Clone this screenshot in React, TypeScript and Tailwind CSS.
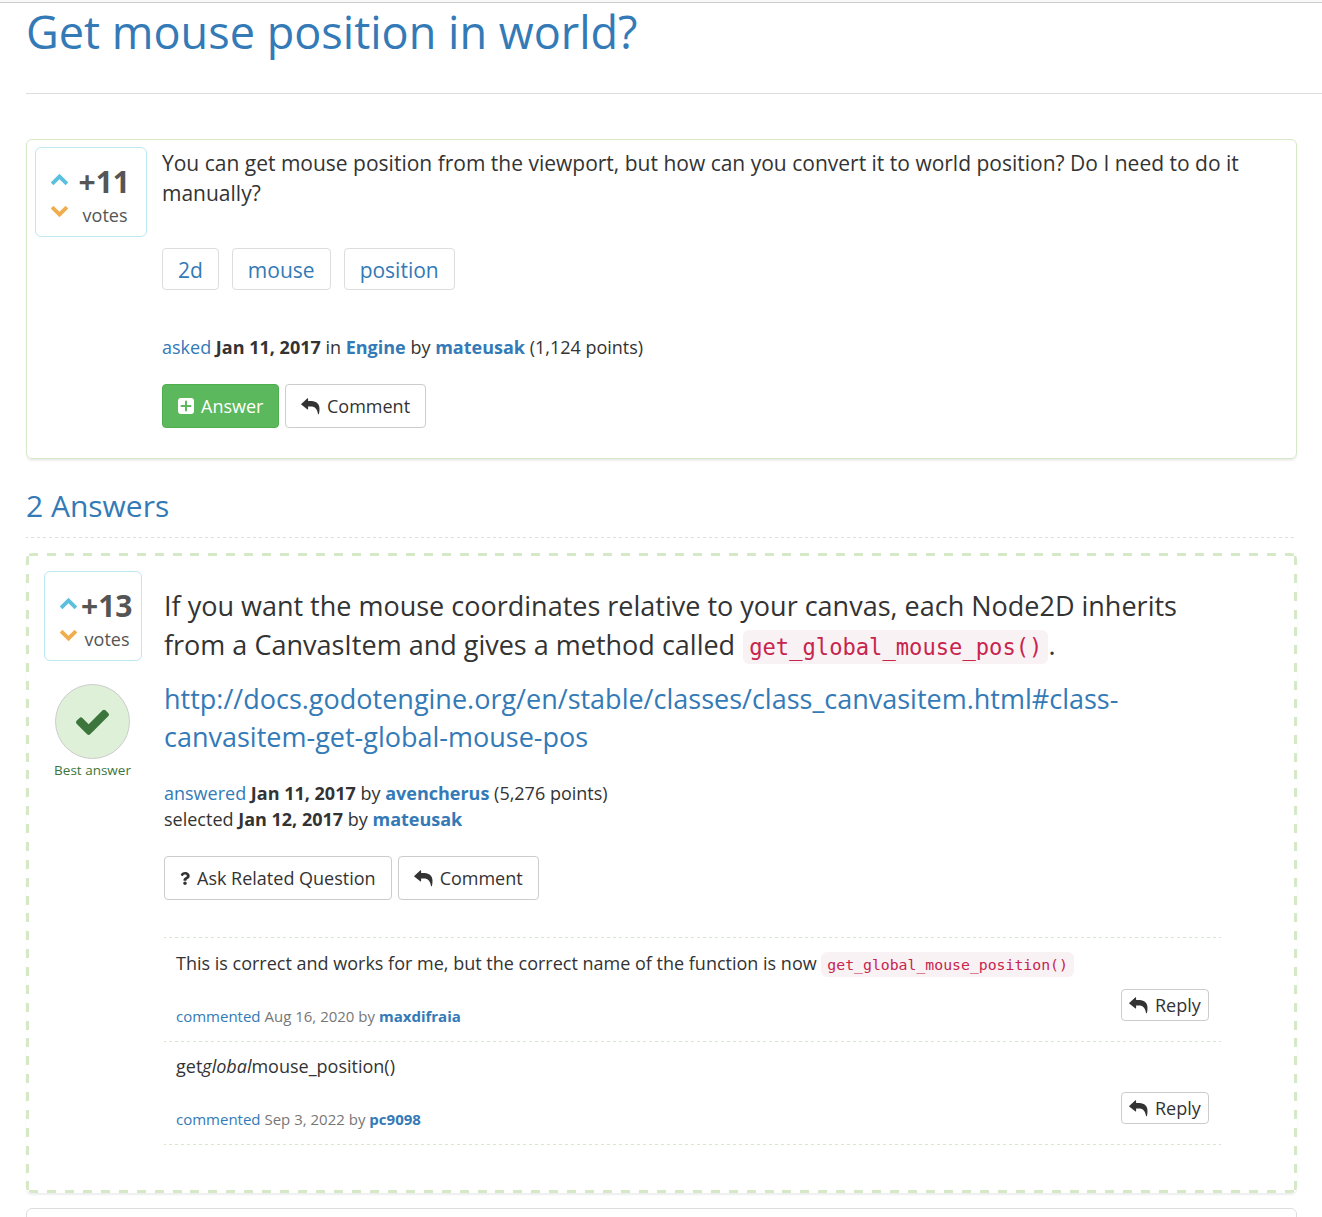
import React from "react";
import { FaQuestion } from "react-icons/fa";

type Children = { children: React.ReactNode };

function ChevronUp() {
  return (
    <svg viewBox="90 480 1612 1035" className="h-[11px] w-[17px] fill-[#5bc0de]">
      <path d="M1683 1331l-166 165q-19 19-45 19t-45-19l-531-531-531 531q-19 19-45 19t-45-19l-166-165q-19-19-19-45.5t19-45.5l742-741q19-19 45-19t45 19l742 741q19 19 19 45.5t-19 45.5z" />
    </svg>
  );
}

function ChevronDown() {
  return (
    <svg viewBox="90 480 1612 1035" className="h-[11px] w-[17px] rotate-180 fill-[#f0ad4e]">
      <path d="M1683 1331l-166 165q-19 19-45 19t-45-19l-531-531-531 531q-19 19-45 19t-45-19l-166-165q-19-19-19-45.5t19-45.5l742-741q19-19 45-19t45 19l742 741q19 19 19 45.5t-19 45.5z" />
    </svg>
  );
}

function CheckIcon() {
  return (
    <svg viewBox="121 306 1550 1216" className="h-[26px] w-[33px] fill-[#3c763d]">
      <path d="M1671 566q0 40-28 68l-724 724-136 136q-28 28-68 28t-68-28l-136-136-362-362q-28-28-28-68t28-68l136-136q28-28 68-28t68 28l294 295 656-657q28-28 68-28t68 28l136 136q28 28 28 68z" />
    </svg>
  );
}

function ReplyIcon() {
  return (
    <svg viewBox="0 0 19 17" className="h-[17px] w-[19px] fill-[#333]">
      <path d="M.2 5.900 6.200.5c.5-.4.9-.2.9.4v2.200h3.400c5 .2 8 3 8 7.800 0 1.800-.2 3.600-.6 5.200-.1.3-.8.3-.9 0C16.200 11 14.200 8.500 9.800 8.500H7.100v2.400c0 .6-.4.8-.9.4L.2 6.500c-.2-.2-.2-.4 0-.6z" />
    </svg>
  );
}

function PlusSquareIcon() {
  return (
    <svg viewBox="0 0 16 16" className="size-4">
      <rect width="16" height="16" rx="3" fill="#fff" />
      <path d="M8 3.500v9M3.500 8h9" stroke="#5cb85c" strokeWidth="2" strokeLinecap="round" />
    </svg>
  );
}

function Button({ children }: Children) {
  return (
    <button className="flex h-[44px] items-center rounded-[4px] border border-[#ccc] px-[15px] text-[18px] leading-[26px] whitespace-nowrap">
      {children}
    </button>
  );
}

function Tag({ children }: Children) {
  return (
    <a className="flex h-[42px] items-center rounded-[4px] border border-[#ddd] px-[15px] pt-px text-[21px] leading-[30px] text-[#337ab7]">
      {children}
    </a>
  );
}

function Link({ children }: Children) {
  return <a className="text-[#337ab7]">{children}</a>;
}

function DashedLine() {
  return <div className="h-px bg-[repeating-linear-gradient(90deg,#d6e9c6_0_2px,transparent_2px_5px,#d6e9c6_5px_6px)]" />;
}

function Comment({ body, date, author }: { body: React.ReactNode; date: string; author: string }) {
  return (
    <div className="flex justify-between px-3 pt-3">
      <div>
        <p className="h-[55px] text-[18px] leading-[26px]">{body}</p>
        <p className="text-[15px] leading-[22px] text-[#777]">
          <Link>commented</Link> {date} by{" "}
          <b>
            <Link>{author}</Link>
          </b>
        </p>
      </div>
      <button className="mt-[39px] flex h-8 w-[88px] items-center rounded-[4px] border border-[#ccc] pl-[7px] text-[18px] leading-[26px]">
        <span className="mr-[7px]"><ReplyIcon /></span>
        Reply
      </button>
    </div>
  );
}

export default function App() {
  return (
    <div className="h-[1217px] w-full overflow-hidden bg-white font-['Open_Sans',sans-serif] text-[#333]">
      <div className="h-[3px] border-b border-[#ccc] bg-[#f9f9f9]" />

      <header className="ml-[26px] h-[91px] border-b border-[#ddd] pt-[4px]">
        <h1 className="text-[45.05px] leading-[50px] text-[#337ab7]">Get mouse position in world?</h1>
      </header>

      <main className="ml-[26px] w-[1271px]">
        <section className="mt-[45px] flex h-[320px] rounded-[6px] border border-[#d6e9c6] px-2 pt-[7px] shadow-[0_2px_2px_rgba(0,0,0,0.07)]">
          <div className="flex h-[90px] w-[112px] shrink-0 rounded-[6px] border border-[#bce8f1] pl-[15px] text-[#555]">
            <div className="flex flex-col gap-[21px] pt-[26px]">
              <ChevronUp />
              <ChevronDown />
            </div>
            <div className="w-[62px] text-right">
              <div className="h-[33px] pt-[13px] text-[30px] leading-[41px] font-bold">+11</div>
              <div className="mt-[20px] pr-[2.5px] text-[18px] leading-[28px]">votes</div>
            </div>
          </div>
          <div className="ml-[15px] pt-px">
            <p className="w-[1100px] text-[21px] leading-[30px]">
              You can get mouse position from the viewport, but how can you convert it to world position? Do I need to do it manually?
            </p>
            <div className="mt-[40px] flex gap-[13px]">
              <Tag>2d</Tag>
              <Tag>mouse</Tag>
              <Tag>position</Tag>
            </div>
            <p className="mt-[44px] text-[18px] leading-[26px]">
              <Link>asked</Link> <b>Jan 11, 2017</b> in <b><Link>Engine</Link></b> by <b><Link>mateusak</Link></b> (1,124 points)
            </p>
            <div className="mt-[24px] flex gap-[6px]">
              <button className="flex h-[44px] w-[117px] items-center gap-[7px] rounded-[4px] border border-[#4cae4c] bg-[#5cb85c] pl-[15px] text-[18px] leading-[26px] text-white">
                <PlusSquareIcon />
                Answer
              </button>
              <Button>
                <span className="mr-[7px]"><ReplyIcon /></span>
                Comment
              </Button>
            </div>
          </div>
        </section>

        <h2 className="mt-[30px] text-[30px] leading-[33px] text-[#337ab7]">2 Answers</h2>
        <div className="mt-[15px] h-px bg-[repeating-linear-gradient(90deg,#ddd_0_2px,transparent_2px_5px,#ddd_5px_6px)]" />

        <section className="mt-[15px] flex h-[640px] rounded-[6px] pt-[18px] pl-[18px] shadow-[0_2px_2px_rgba(0,0,0,0.07)] [background:repeating-linear-gradient(90deg,#d6e9c6_0_9px,transparent_9px_17.94px)_3px_0/1265px_3px_no-repeat,repeating-linear-gradient(90deg,#d6e9c6_0_9px,transparent_9px_17.94px)_3px_100%/1265px_3px_no-repeat,repeating-linear-gradient(180deg,#d6e9c6_0_9px,transparent_9px_17.87px)_0_3px/3px_635px_no-repeat,repeating-linear-gradient(180deg,#d6e9c6_0_9px,transparent_9px_17.87px)_100%_3px/3px_635px_no-repeat]">
          <div className="w-[98px] shrink-0">
            <div className="flex h-[90px] w-[98px] rounded-[6px] border border-[#bce8f1] pl-[15px] text-[#555]">
              <div className="flex flex-col gap-[21px] pt-[26px]">
                <ChevronUp />
                <ChevronDown />
              </div>
              <div className="w-[56px] text-right">
                <div className="h-[33px] pt-[13px] pr-[0.5px] text-[30px] leading-[41px] font-bold">+13</div>
                <div className="mt-[20px] pr-[3.5px] text-[18px] leading-[28px]">votes</div>
              </div>
            </div>
            <div className="mt-[23px] flex w-[97px] flex-col items-center">
              <div className="flex size-[75px] items-center justify-center rounded-full border border-[#ccc] bg-[#dff0d8]">
                <CheckIcon />
              </div>
              <div className="mt-px text-[13.5px] leading-[20px] whitespace-nowrap text-[#3c763d]">Best answer</div>
            </div>
          </div>

          <div className="ml-[22px] w-[1057px] pt-[16px]">
            <p className="h-[77px] text-[27px] leading-[38.5px]">
              If you want the mouse coordinates relative to your canvas, each Node2D inherits
              <br />
              from a CanvasItem and gives a method called{" "}
              <code className="ml-px rounded-[6px] bg-[#f9f2f4] px-[6px] py-[4px] font-['DejaVu_Sans_Mono',monospace] text-[22.15px] leading-none text-[#c7254e]">
                get_global_mouse_pos()
              </code>
              .
            </p>
            <p className="mt-[16px] text-[27px] leading-[38px] text-[#337ab7]">
              http://docs.godotengine.org/en/stable/classes/class_canvasitem.html#class-
              <br />
              canvasitem-get-global-mouse-pos
            </p>
            <p className="mt-[24px] text-[18px] leading-[26px]">
              <Link>answered</Link> <b>Jan 11, 2017</b> by <b><Link>avencherus</Link></b> (5,276 points)
              <br />
              selected <b>Jan 12, 2017</b> by <b><Link>mateusak</Link></b>
            </p>
            <div className="mt-[24px] flex gap-[6px]">
              <Button>
                <FaQuestion className="mr-[7px] h-[13px] w-[10px]" />
                Ask Related Question
              </Button>
              <Button>
                <span className="mr-[7px]"><ReplyIcon /></span>
                Comment
              </Button>
            </div>

            <div className="mt-[37px]">
              <DashedLine />
              <div className="h-[103px]">
                <Comment
                  body={
                    <>
                      This is correct and works for me, but the correct name of the function is now{" "}
                      <code className="rounded-[6px] bg-[#f9f2f4] px-[6px] py-[4px] font-['DejaVu_Sans_Mono',monospace] text-[14.8px] leading-none text-[#c7254e]">
                        get_global_mouse_position()
                      </code>
                    </>
                  }
                  date="Aug 16, 2020"
                  author="maxdifraia"
                />
              </div>
              <DashedLine />
              <div className="-mt-px h-[102px] pb-px">
                <Comment
                  body={
                    <>
                      get<em>global</em>mouse_position()
                    </>
                  }
                  date="Sep 3, 2022"
                  author="pc9098"
                />
              </div>
              <div className="pt-px">
                <DashedLine />
              </div>
            </div>
          </div>
        </section>

        <section className="mt-[15px] h-10 rounded-[6px] border border-[#ddd]" />
      </main>
    </div>
  );
}
